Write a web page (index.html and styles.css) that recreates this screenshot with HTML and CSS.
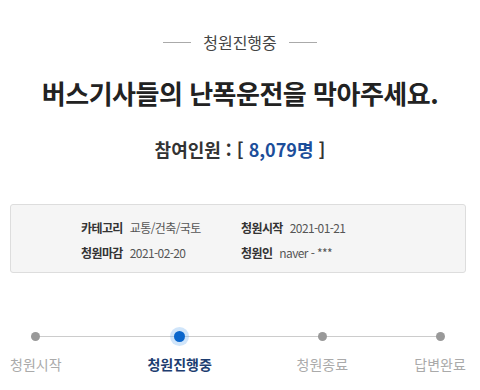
FILE: index.html
```html
<!DOCTYPE html>
<html lang="ko">
<head>
    <meta charset="UTF-8">
    <meta name="viewport" content="width=device-width, initial-scale=1.0">
    <title>청원진행중</title>
    <link rel="stylesheet" href="styles.css">
</head>
<body>
    <div class="petition">
        <!-- Status Header -->
        <div class="status">
            <span class="status-line"></span>
            <span class="status-text">청원진행중</span>
            <span class="status-line"></span>
        </div>

        <h1 class="title">버스기사들의 난폭운전을 막아주세요.</h1>

        <div class="count">참여인원 : [ <span class="count-num">8,079명</span> ]</div>

        <!-- Info Box -->
        <div class="info-box">
            <div class="info-grid">
                <div class="info-item"><span class="info-label">카테고리</span><span class="info-value">교통/건축/국토</span></div>
                <div class="info-item"><span class="info-label">청원시작</span><span class="info-value">2021-01-21</span></div>
                <div class="info-item"><span class="info-label">청원마감</span><span class="info-value">2021-02-20</span></div>
                <div class="info-item"><span class="info-label">청원인</span><span class="info-value">naver - ***</span></div>
            </div>
        </div>

        <!-- Progress Steps -->
        <div class="steps">
            <div class="step-line"></div>
            <div class="step step-1"><span class="dot"></span><span class="step-label">청원시작</span></div>
            <div class="step step-2 active"><span class="dot"></span><span class="step-label">청원진행중</span></div>
            <div class="step step-3"><span class="dot"></span><span class="step-label">청원종료</span></div>
            <div class="step step-4"><span class="dot"></span><span class="step-label">답변완료</span></div>
        </div>
    </div>
</body>
</html>
```

FILE: styles.css
```css
/* General Styles */
body {
    margin: 0;
    background-color: #fff;
    font-family: 'Noto Sans CJK KR', 'Noto Sans', sans-serif;
    color: #333;
}

.petition {
    width: 480px;
    height: 390px;
    overflow: hidden;
}

/* Status Header */
.status {
    display: flex;
    justify-content: center;
    align-items: center;
    gap: 12px;
    padding-top: 30px;
    height: 24px;
}

.status-line {
    width: 28px;
    height: 1px;
    background-color: #aaa;
}

.status-text {
    font-size: 16px;
    color: #444;
    line-height: 24px;
}

.title {
    margin: 23px 0 0;
    text-align: center;
    font-size: 26px;
    font-weight: bold;
    letter-spacing: -0.5px;
    line-height: 32px;
    color: #222;
}

.count {
    margin-top: 27px;
    text-align: center;
    font-size: 18px;
    font-weight: bold;
    line-height: 26px;
    color: #333;
}

.count-num {
    color: #1c4e9a;
}

/* Info Box */
.info-box {
    margin: 42px 14px 0 10px;
    height: 69px;
    background-color: #f5f5f5;
    border: 1px solid #ddd;
    border-radius: 3px;
    padding-left: 70px;
    box-sizing: border-box;
}

.info-grid {
    display: grid;
    grid-template-columns: 160px 160px;
    row-gap: 7px;
    padding-top: 14px;
}

.info-item {
    display: flex;
    gap: 7px;
    font-size: 12px;
    line-height: 18px;
    letter-spacing: -0.6px;
}

.info-label {
    font-weight: bold;
    color: #333;
}

.info-value {
    color: #555;
}

/* Progress Steps */
.steps {
    position: relative;
    display: flex;
    margin-top: 59px;
    height: 50px;
}

.step-line {
    position: absolute;
    top: 4px;
    left: 36px;
    width: 406px;
    height: 1px;
    background-color: #ccc;
}

.step {
    position: relative;
    width: 80px;
    display: flex;
    flex-direction: column;
    align-items: center;
}

.step-1 { margin-left: -4px; }
.step-2 { margin-left: 64px; }
.step-3 { margin-left: 63px; }
.step-4 { margin-left: 38px; }

.dot {
    width: 9px;
    height: 9px;
    border-radius: 50%;
    background-color: #999;
}

.active .dot {
    width: 11px;
    height: 11px;
    margin-top: -1px;
    margin-bottom: -1px;
    background-color: #0a66cc;
    box-shadow: 0 0 0 4px rgba(120, 180, 240, 0.35);
}

.step-label {
    margin-top: 13px;
    font-size: 14px;
    line-height: 20px;
    color: #aaa;
    white-space: nowrap;
}

.active .step-label {
    font-weight: bold;
    color: #1d3d70;
}
```
